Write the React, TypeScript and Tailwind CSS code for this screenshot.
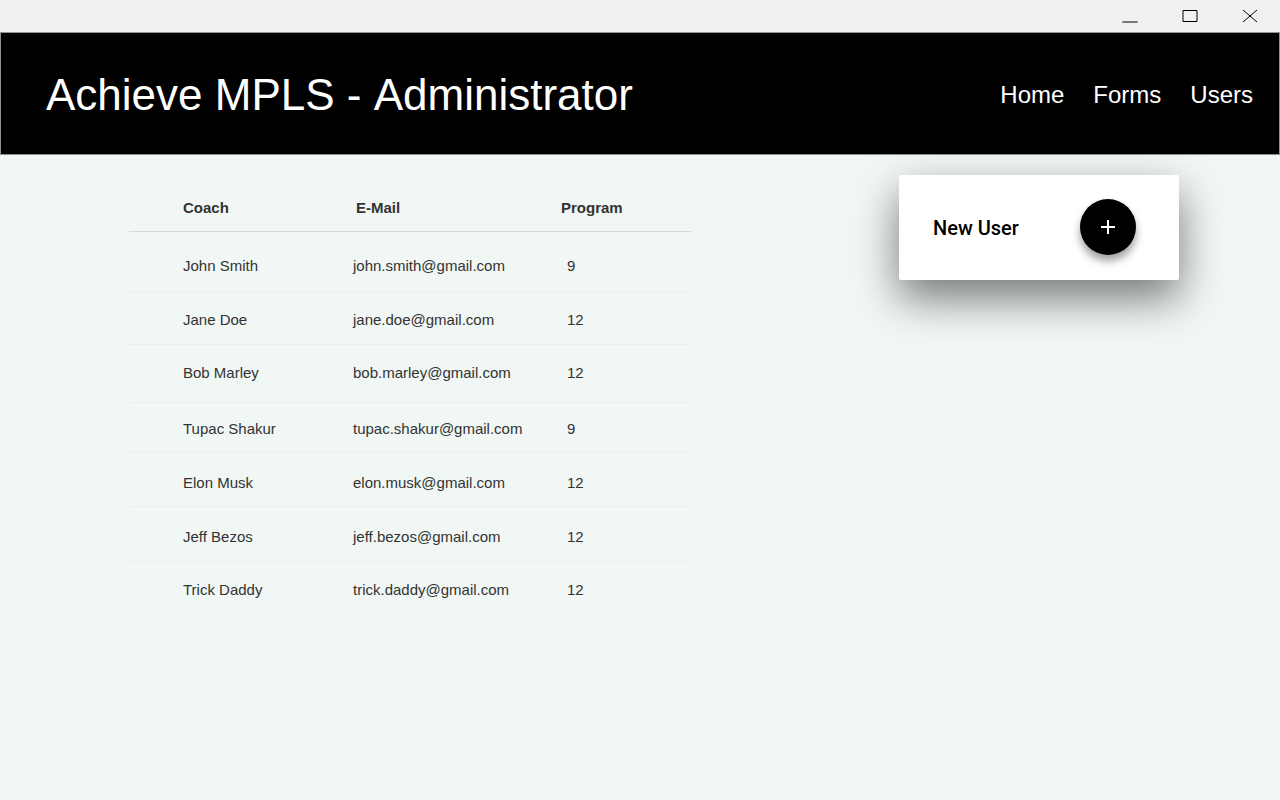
type Coach = { name: string; email: string; program: number; row: string };

const coaches: Coach[] = [
  { name: "John Smith", email: "john.smith@gmail.com", program: 9, row: "h-[60px] *:pt-6" },
  { name: "Jane Doe", email: "jane.doe@gmail.com", program: 12, row: "h-[53px] *:pt-[18px]" },
  { name: "Bob Marley", email: "bob.marley@gmail.com", program: 12, row: "h-[58px] *:pt-[18px]" },
  { name: "Tupac Shakur", email: "tupac.shakur@gmail.com", program: 9, row: "h-[50px] *:pt-4" },
  { name: "Elon Musk", email: "elon.musk@gmail.com", program: 12, row: "h-[54px] *:pt-5" },
  { name: "Jeff Bezos", email: "jeff.bezos@gmail.com", program: 12, row: "h-[55px] *:pt-5" },
  { name: "Trick Daddy", email: "trick.daddy@gmail.com", program: 12, row: "h-[56px] *:pt-[18px]" },
];

function WindowBar() {
  const button = "grid h-8 w-[60px] place-items-center";
  return (
    <div className="flex h-8 justify-end bg-[#f1f1f1]">
      <button type="button" aria-label="Minimize" className={button}>
        <svg width="16" height="16" viewBox="0 0 16 16" fill="none" stroke="#000">
          <path d="M0.4 14H15.6" />
        </svg>
      </button>
      <button type="button" aria-label="Maximize" className={button}>
        <svg width="16" height="16" viewBox="0 0 16 16" fill="none" stroke="#000">
          <path d="M1 2.5H15V13.5H1Z" />
        </svg>
      </button>
      <button type="button" aria-label="Close" className={button}>
        <svg width="16" height="16" viewBox="0 0 16 16" fill="none" stroke="#000">
          <path d="M1 2L15 14M15 2L1 14" />
        </svg>
      </button>
    </div>
  );
}

export default function App() {
  return (
    <div className="min-h-screen bg-[#f0f7f5] font-['Liberation_Sans',Arial,sans-serif] text-[#333]">
      <WindowBar />
      <header className="flex h-[123px] items-center justify-between border border-[#8c9290] bg-black pt-[2px] pr-[26px] pl-[45px] text-white">
        <h1 className="text-[44px] [font-kerning:none]">Achieve MPLS - Administrator</h1>
        <nav className="flex gap-[29px] text-2xl">
          <a href="#home">Home</a>
          <a href="#forms">Forms</a>
          <a href="#users">Users</a>
        </nav>
      </header>
      <main className="flex items-start justify-between pt-5 pr-[101px] pl-[129px]">
        <table className="mt-[10px] w-[562px] table-fixed border-collapse text-left text-[15px] leading-5">
          <thead>
            <tr className="h-[46px] border-b border-[#d5dad8]">
              <th className="w-[224px] pl-[54px]">Coach</th>
              <th className="w-[208px] pl-[3px]">E-Mail</th>
              <th>Program</th>
            </tr>
          </thead>
          <tbody>
            {coaches.map((c) => (
              <tr key={c.email} className={`${c.row} border-b border-[#ebeeed] align-top last:border-0`}>
                <td className="pl-[54px]">{c.name}</td>
                <td>{c.email}</td>
                <td className="pl-[6px]">{c.program}</td>
              </tr>
            ))}
          </tbody>
        </table>
        <section className="flex h-[105px] w-[280px] items-center justify-between rounded-[2px] bg-white pr-[43px] pb-px pl-[34px] shadow-[0_18px_44px_rgba(0,0,0,0.52)]">
          <h2 className="pt-[2px] font-[Roboto,sans-serif] text-xl font-medium text-black">New User</h2>
          <button
            type="button"
            aria-label="Add new user"
            className="grid size-14 place-items-center rounded-full bg-black shadow-[0_6px_8px_rgba(0,0,0,0.38)]"
          >
            <svg width="24" height="24" viewBox="0 0 24 24" fill="#fff">
              <path d="M19 13h-6v6h-2v-6H5v-2h6V5h2v6h6z" />
            </svg>
          </button>
        </section>
      </main>
    </div>
  );
}
